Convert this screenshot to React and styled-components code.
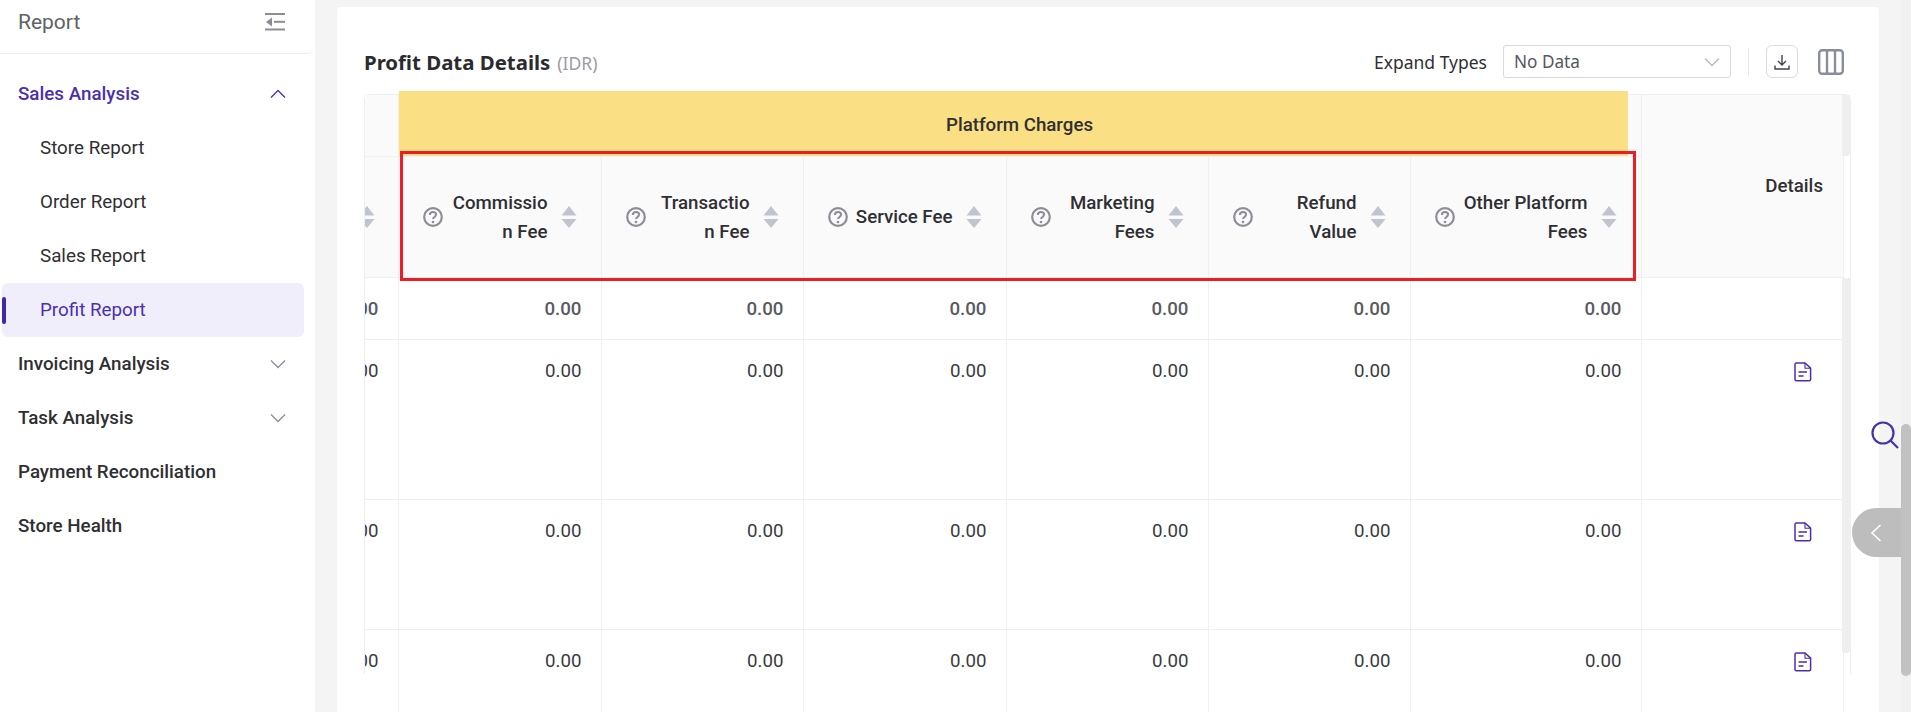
import React from 'react';
import styled, { createGlobalStyle } from 'styled-components';

const Global = createGlobalStyle`
  html, body { margin: 0; padding: 0; height: 100%; overflow: hidden; background: #f4f4f4; }
  body { font-family: Roboto, "Liberation Sans", sans-serif; color: #2f2f33; }
  * { box-sizing: border-box; }
`;

const Page = styled.div`
  display: flex;
  width: 1911px;
  height: 712px;
  overflow: hidden;
  position: relative;
`;

const Sidebar = styled.aside`
  width: 315px;
  flex: none;
  background: #fff;
`;

const SideHeader = styled.div`
  height: 54px;
  padding: 0 30px 10px 18px;
  display: flex;
  align-items: center;
  justify-content: space-between;
  border-bottom: 1px solid #eeeeee;
  border-bottom-right-radius: 8px;
  font-size: 21px;
  color: #606266;
`;

const Menu = styled.nav`
  padding-top: 13px;
  display: flex;
  flex-direction: column;
`;

const MenuRow = styled.div`
  height: 54px;
  display: flex;
  align-items: center;
  justify-content: space-between;
  padding: 0 29px 0 18px;
  font-size: 18.8px;
  font-weight: 500;
  color: ${p => (p.$open ? '#4b2fb0' : '#2f2f33')};
`;

const SubRow = styled.div`
  height: 54px;
  display: flex;
  align-items: center;
  position: relative;
  margin: 0 11px 0 2px;
  padding-left: 38px;
  font-size: 18.8px;
  border-radius: 6px;
  color: ${p => (p.$active ? '#4b2fb0' : '#2f2f33')};
  background: ${p => (p.$active ? '#f1eefc' : 'transparent')};
`;

const ActiveBar = styled.span`
  position: absolute;
  left: 0;
  top: 14px;
  width: 4px;
  height: 27px;
  border-radius: 2px;
  background: #4326ab;
`;

const Main = styled.main`
  flex: 1;
  padding: 7px 32px 0 22px;
  min-width: 0;
`;

const Card = styled.section`
  background: #fff;
  border-radius: 4px 4px 0 0;
  height: 705px;
  padding: 38px 28px 0 27px;
  position: relative;
`;

const TitleBar = styled.div`
  height: 33px;
  display: flex;
  align-items: center;
  justify-content: space-between;
  padding-right: 7px;
  margin-bottom: 16px;
`;

const Title = styled.h2`
  margin: 0;
  font-family: "Noto Sans", sans-serif;
  font-size: 20.4px;
  font-weight: 700;
  color: #2b2b2f;
  display: flex;
  align-items: baseline;
  gap: 7px;
`;

const Unit = styled.span`
  font-size: 17.5px;
  font-weight: 400;
  color: #9a9ca6;
`;

const Tools = styled.div`
  display: flex;
  align-items: center;
`;

const ToolLabel = styled.span`
  font-family: "Noto Sans", sans-serif;
  font-size: 17.5px;
  color: #2f2f33;
  margin-right: 16px;
`;

const Select = styled.div`
  width: 228px;
  height: 33px;
  border: 1px solid #d9d9d9;
  border-radius: 3px;
  display: flex;
  align-items: center;
  justify-content: space-between;
  padding: 0 10px;
  font-family: "Noto Sans", sans-serif;
  font-size: 17.2px;
  color: #555860;
`;

const Divider = styled.span`
  width: 1px;
  height: 27px;
  background: #e6e6e6;
  margin: 0 17px;
`;

const IconButton = styled.div`
  width: 32px;
  height: 33px;
  border: 1px solid #dcdcdc;
  border-radius: 6px;
  display: flex;
  align-items: center;
  justify-content: center;
  margin-right: 20px;
`;

const TableWrap = styled.div`
  position: relative;
  width: 1487px;
  height: 580px;
  border-top: 1px solid #eeeeee;
  border-left: 1px solid #eeeeee;
  border-right: 1px solid #eeeeee;
  border-top-left-radius: 6px;
  border-top-right-radius: 6px;
`;

const Table = styled.table`
  table-layout: fixed;
  border-collapse: collapse;
  width: 1479px;
  font-size: 18.7px;
`;

const HeadCell = styled.th`
  background: #fafafa;
  font-weight: 500;
  padding: 0;
  border: 1px solid #efefef;
  border-top: none;
  height: ${p => p.$h || 'auto'};
  color: #2f2f33;
  &:first-child { border-left: none; overflow: hidden; }
`;

const GroupCell = styled(HeadCell)`
  position: relative;
  text-align: center;
`;

const GroupLabel = styled.span`
  position: relative;
  z-index: 2;
`;

const Band = styled.span`
  position: absolute;
  left: 0;
  top: -4px;
  bottom: 0;
  width: 1229px;
  background: #fadf84;
  z-index: 1;
`;

const DetailsHead = styled(HeadCell)`
  text-align: right;
  padding: 1px 20px 0 0;
  vertical-align: middle;
`;

const Inner = styled.div`
  display: flex;
  align-items: center;
  height: 100%;
  padding: 0 24px 0 24px;
  text-align: right;
`;

const Clipped = styled.div`
  display: flex;
  align-items: center;
  justify-content: flex-start;
  margin-left: -6px;
`;

const HelpWrap = styled.span`
  flex: none;
  width: 20px;
  height: 20px;
  margin-right: 6px;
  display: flex;
`;

const ColName = styled.span`
  flex: 1;
  min-width: 0;
  line-height: 29px;
  margin-top: 2px;
  overflow-wrap: anywhere;
`;

const Sort = styled.span`
  flex: none;
  margin-left: 13px;
  display: flex;
`;

const Td = styled.td`
  border: 1px solid #efefef;
  padding: ${p => (p.$strong ? '2px 19px 0 0' : '19px 19px 0 0')};
  vertical-align: ${p => (p.$strong ? 'middle' : 'top')};
  text-align: right;
  height: ${p => p.$h};
  line-height: 24px;
  font-weight: ${p => (p.$strong ? 500 : 400)};
  color: ${p => (p.$strong ? '#5a5a60' : '#3a3a40')};
  white-space: nowrap;
  overflow: hidden;
  &:first-child { border-left: none; }
`;

const ScrolledValue = styled.div`
  display: flex;
  justify-content: flex-end;
`;

const ActionTd = styled(Td)`
  padding-right: 31px;
  padding-top: 22px;
  line-height: 0;
`;

const ScrollTrack = styled.div`
  position: absolute;
  right: 0;
  width: 8px;
  background: #efefef;
  top: ${p => p.$top}px;
  height: ${p => p.$h}px;
  border-radius: 0 0 3px 3px;
`;

const RedFrame = styled.div`
  position: absolute;
  left: 400px;
  top: 151px;
  width: 1236px;
  height: 130px;
  border: 3px solid #ee1c25;
  z-index: 5;
  pointer-events: none;
`;

const PageScroll = styled.div`
  position: absolute;
  right: 0;
  top: 0;
  bottom: 0;
  width: 10px;
  background: #f1f1f1;
`;

const PageThumb = styled.div`
  position: absolute;
  right: 0;
  top: 424px;
  width: 10px;
  height: 252px;
  border-radius: 5px;
  background: #c1c1c1;
  z-index: 4;
`;

const SearchFloat = styled.div`
  position: absolute;
  left: 1871px;
  top: 421px;
  z-index: 3;
  display: flex;
`;

const CollapseTab = styled.div`
  position: absolute;
  left: 1852px;
  top: 508px;
  width: 49px;
  height: 49px;
  background: #bdbdbd;
  border-radius: 24.5px 0 0 24.5px;
  display: flex;
  align-items: center;
  padding-left: 18px;
  z-index: 3;
`;

const Chevron = ({ up, color = '#8a8d96' }) => (
  <svg width="16" height="10" viewBox="0 0 16 10" fill="none">
    <path d={up ? 'M1 8.5 8 1.5l7 7' : 'M1 1.5l7 7 7-7'} stroke={color} strokeWidth="1.3" />
  </svg>
);

const CollapseIcon = () => (
  <svg width="20" height="18" viewBox="0 0 20 18" fill="#8b8d93">
    <rect x="0" y="0" width="20" height="2" />
    <rect x="0" y="15.5" width="20" height="2" />
    <rect x="9" y="7.8" width="11" height="2" />
    <path d="M7 4.5v9L1 9z" />
  </svg>
);

const HelpIcon = () => (
  <svg width="20" height="20" viewBox="0 0 20 20" fill="none">
    <circle cx="10" cy="10" r="8.8" stroke="#8d8d95" strokeWidth="2.2" />
    <path d="M6.9 7.9c0-1.8 1.3-2.9 3.1-2.9s3.1 1.1 3.1 2.6c0 1.3-.8 1.9-1.7 2.5-.9.5-1.3 1-1.3 2" stroke="#8d8d95" strokeWidth="2" />
    <circle cx="10" cy="15" r="1.3" fill="#8d8d95" />
  </svg>
);

const SortIcon = () => (
  <svg width="16" height="22" viewBox="0 0 16 22" fill="#c0c4cf">
    <path d="M8 0l7.5 9.5H.5z" />
    <path d="M8 22L.5 13h15z" />
  </svg>
);

const DocIcon = () => (
  <svg width="18" height="20" viewBox="0 0 18 20" fill="none" stroke="#4b2fb0" strokeWidth="1.5">
    <path d="M2.4 1h8.6l5.6 5.2v11.2a1.4 1.4 0 0 1-1.4 1.4H2.4A1.4 1.4 0 0 1 1 17.4V2.4A1.4 1.4 0 0 1 2.4 1z" />
    <path d="M11 1v5.2h5.6" strokeWidth="1.1" />
    <path d="M4.5 10h8.5M4.5 14h5" />
  </svg>
);

const DownloadIcon = () => (
  <svg width="16" height="16" viewBox="0 0 16 16" fill="none" stroke="#3d4250" strokeWidth="1.4">
    <path d="M8 1v9.5M4 7l4 4 4-4" />
    <path d="M1 11.5V15h14v-3.5" />
  </svg>
);

const ColumnsIcon = () => (
  <svg width="26" height="26" viewBox="0 0 26 26" fill="none" stroke="#8a8e9c" strokeWidth="2.4">
    <rect x="1.2" y="1.2" width="23.6" height="23.6" rx="3" />
    <path d="M9 1v24M17 1v24" />
  </svg>
);

const SearchIcon = () => (
  <svg width="28" height="28" viewBox="0 0 28 28" fill="none" stroke="#4431ae" strokeWidth="2.2">
    <circle cx="12" cy="12" r="10.5" />
    <path d="M19.5 19.5 27 27" />
  </svg>
);

const columns = [
  { name: 'Commission Fee', w: 203 },
  { name: 'Transaction Fee', w: 202 },
  { name: 'Service Fee', w: 203 },
  { name: 'Marketing Fees', w: 202 },
  { name: 'Refund Value', w: 202 },
  { name: 'Other Platform Fees', w: 231 },
];

const rows = [
  { h: '62px', strong: true },
  { h: '160px', action: true },
  { h: '130px', action: true },
  { h: '160px', action: true },
];

const subItems = ['Store Report', 'Order Report', 'Sales Report'];

export default function App() {
  return (
    <>
      <Global />
      <Page>
        <Sidebar>
          <SideHeader>
            Report
            <CollapseIcon />
          </SideHeader>
          <Menu>
            <MenuRow $open>
              Sales Analysis
              <Chevron up color="#4b2fb0" />
            </MenuRow>
            {subItems.map(s => <SubRow key={s}>{s}</SubRow>)}
            <SubRow $active><ActiveBar />Profit Report</SubRow>
            <MenuRow>Invoicing Analysis<Chevron /></MenuRow>
            <MenuRow>Task Analysis<Chevron /></MenuRow>
            <MenuRow>Payment Reconciliation</MenuRow>
            <MenuRow>Store Health</MenuRow>
          </Menu>
        </Sidebar>
        <Main>
          <Card>
            <TitleBar>
              <Title>Profit Data Details <Unit>(IDR)</Unit></Title>
              <Tools>
                <ToolLabel>Expand Types</ToolLabel>
                <Select>No Data<Chevron color="#b5b7bd" /></Select>
                <Divider />
                <IconButton><DownloadIcon /></IconButton>
                <ColumnsIcon />
              </Tools>
            </TitleBar>
            <TableWrap>
              <Table>
                <colgroup>
                  <col style={{ width: 33 }} />
                  {columns.map(c => <col key={c.name} style={{ width: c.w }} />)}
                  <col />
                </colgroup>
                <thead>
                  <tr>
                    <HeadCell $h="61px" />
                    <GroupCell colSpan={6}>
                      <Band />
                      <GroupLabel>Platform Charges</GroupLabel>
                    </GroupCell>
                    <DetailsHead rowSpan={2}>Details</DetailsHead>
                  </tr>
                  <tr>
                    <HeadCell $h="121px"><Clipped><SortIcon /></Clipped></HeadCell>
                    {columns.map(c => (
                      <HeadCell key={c.name}>
                        <Inner>
                          <HelpWrap><HelpIcon /></HelpWrap>
                          <ColName>{c.name}</ColName>
                          <Sort><SortIcon /></Sort>
                        </Inner>
                      </HeadCell>
                    ))}
                  </tr>
                </thead>
                <tbody>
                  {rows.map((r, i) => (
                    <tr key={i}>
                      <Td $h={r.h} $strong={r.strong}><ScrolledValue>0.00</ScrolledValue></Td>
                      {columns.map(c => (
                        <Td key={c.name} $h={r.h} $strong={r.strong}>0.00</Td>
                      ))}
                      {r.action
                        ? <ActionTd $h={r.h}><DocIcon /></ActionTd>
                        : <Td $h={r.h} />}
                    </tr>
                  ))}
                </tbody>
              </Table>
              <ScrollTrack $top={0} $h={61} />
              <ScrollTrack $top={183} $h={375} />
            </TableWrap>
          </Card>
        </Main>
        <RedFrame />
        <SearchFloat><SearchIcon /></SearchFloat>
        <CollapseTab>
          <svg width="12" height="18" viewBox="0 0 12 18" fill="none">
            <path d="M10.5 1 2 9l8.5 8" stroke="#fff" strokeWidth="1.6" />
          </svg>
        </CollapseTab>
        <PageScroll />
        <PageThumb />
      </Page>
    </>
  );
}
